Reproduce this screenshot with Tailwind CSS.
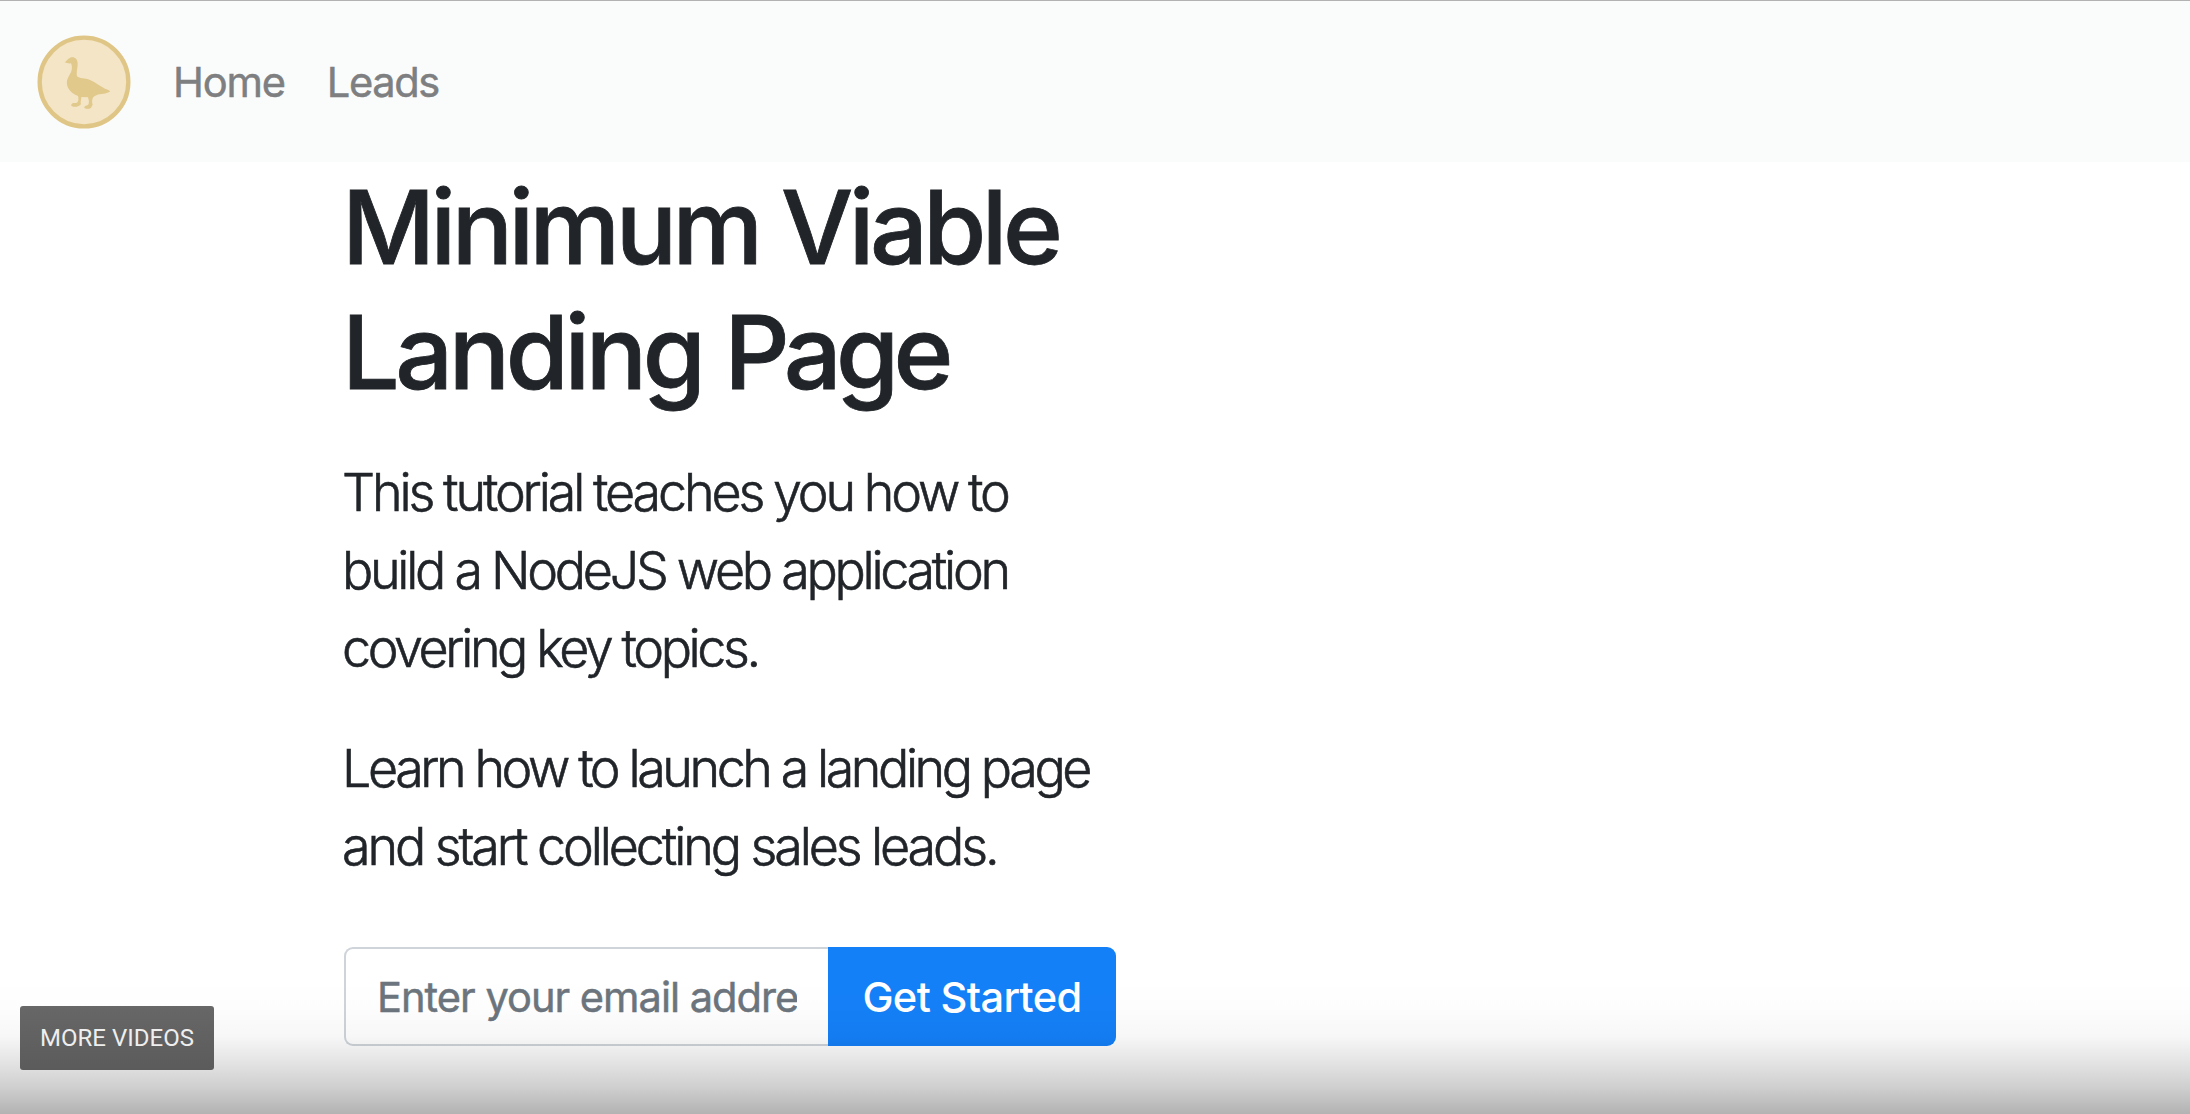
<!doctype html>
<html lang="en">
<head>
  <meta charset="UTF-8">
  <meta name="viewport" content="width=device-width, initial-scale=1.0">
  <script src="https://cdn.jsdelivr.net/npm/@tailwindcss/browser@4"></script>
  <title>Minimum Viable Landing Page</title>
</head>
<body class="relative h-[1114px] overflow-hidden bg-white font-['Inter',sans-serif] text-[#212529]">
    <nav class="flex h-[162px] items-center gap-[42px] border-t border-[#b2b2b2] bg-[#fafcfb] pl-[37px] text-[41.6px] text-[#7e7f81]">
        <a href="/" class="block">
            <svg class="h-[94px] w-[94px]" viewBox="22 29 282 282">
                <circle cx="163" cy="170" r="133" fill="#f3e5c6" stroke="#e0c686" stroke-width="13"/>
                <path fill="#e1c88b" d="M105 111 C112 107 115 98 126 96 C137 95 144 103 144 116 C144 128 139 142 142 153 C149 160 166 158 181 164 C198 171 213 184 226 190 Q241 195 241 199 Q228 206 210 207 C203 208 197 211 191 215 C187 221 186 231 189 238 C185 243 186 249 178 250 C170 251 162 249 164 245 C167 240 175 241 177 236 Q179 226 175 216 L155 215 C155 222 151 232 154 236 C150 242 140 246 132 244 C124 243 123 238 127 235 C132 231 139 236 144 230 C147 225 147 218 145 212 C128 206 114 193 112 177 C110 160 121 149 125 138 C128 130 127 121 124 114 Q113 115 105 111 Z"/>
            </svg>
        </a>
        <div class="flex gap-[42px] pt-[2px] [-webkit-text-stroke:0.5px]">
            <a href="/" class="tracking-[-1.2px]">Home</a>
            <a href="/leads" class="tracking-[-1.35px]">Leads</a>
        </div>
    </nav>

    <main class="ml-[342px] w-[774px] pt-[3px]">
        <h1 class="text-[102px] leading-[125px] font-medium whitespace-nowrap [-webkit-text-stroke:0.8px]">
            <span class="block tracking-[-4.56px]">Minimum Viable</span>
            <span class="block tracking-[-4.4px]">Landing <span class="tracking-[-5.6px]">Page</span></span>
        </h1>
        <p class="mt-[39px] text-[52px] leading-[78px] font-light whitespace-nowrap [-webkit-text-stroke:0.6px]">
            <span class="block tracking-[-3.1px] [word-spacing:-0.8px]">This tutorial teaches you how to</span>
            <span class="block tracking-[-3.28px]">build a NodeJS web application</span>
            <span class="block tracking-[-3.4px]">covering key topics.</span>
        </p>
        <p class="mt-[42px] text-[52px] leading-[78px] font-light whitespace-nowrap [-webkit-text-stroke:0.6px]">
            <span class="block tracking-[-3.43px]">Learn how to launch a landing page</span>
            <span class="block tracking-[-3.1px]">and start collecting sales leads.</span>
        </p>
        <form class="mt-[61px] ml-[2px] flex h-[99px] text-[41.6px]">
            <div class="flex w-[484px] items-center rounded-l-[9px] border-2 border-r-0 border-[#ced4da] bg-white pt-[2px] pr-[31px] pl-[31px]">
                <input type="email" placeholder="Enter your email address" class="w-full tracking-[-1px] outline-none [-webkit-text-stroke:0.5px] placeholder:text-[#6c757d]">
            </div>
            <button type="submit" class="w-[288px] rounded-r-[9px] bg-[#1480f8] pt-[2px] font-medium tracking-[-0.65px] text-white">Get Started</button>
        </form>
    </main>

    <!-- player shade and button -->
    <div class="pointer-events-none absolute inset-x-0 bottom-0 h-[134px] bg-[linear-gradient(to_bottom,transparent_0%,rgba(0,0,0,0.008)_20%,rgba(0,0,0,0.03)_42%,rgba(0,0,0,0.1)_60%,rgba(0,0,0,0.19)_80%,rgba(0,0,0,0.3)_100%)]"></div>
    <button class="absolute top-[1006px] left-[20px] h-[64px] w-[194px] rounded-[3px] bg-linear-to-b from-[#676767] to-[#5b5b5b] font-['Roboto',sans-serif] text-[24px] text-[#eeeeee]">MORE VIDEOS</button>
</body>
</html>
